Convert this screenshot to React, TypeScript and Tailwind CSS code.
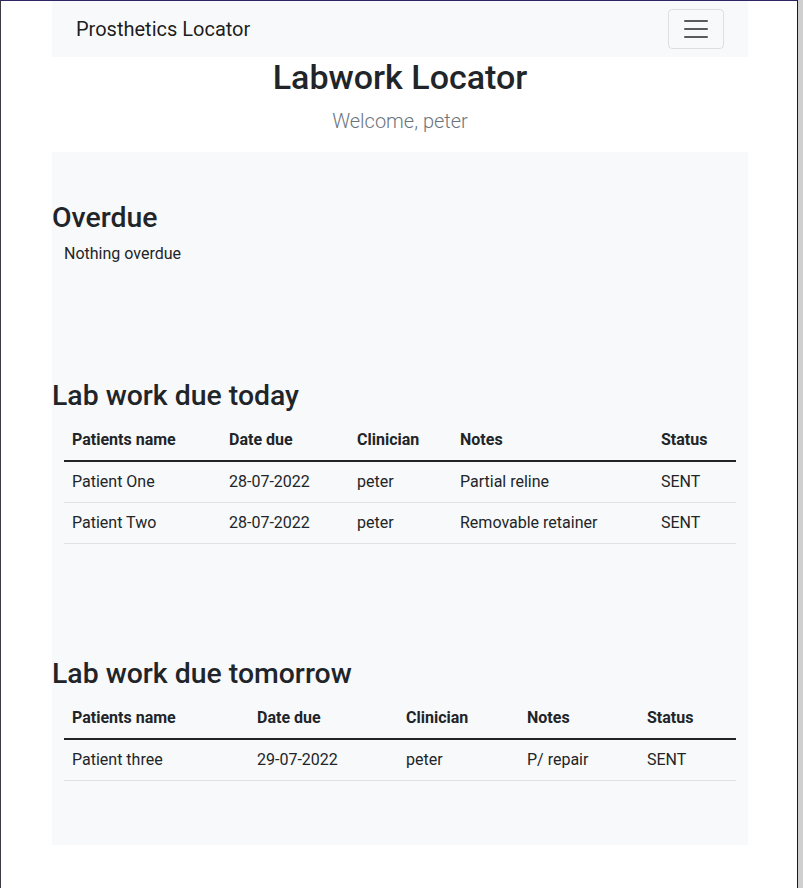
import React from "react";

type Row = { name: string; due: string; clinician: string; notes: string; status: string };

const today: Row[] = [
  { name: "Patient One", due: "28-07-2022", clinician: "peter", notes: "Partial reline", status: "SENT" },
  { name: "Patient Two", due: "28-07-2022", clinician: "peter", notes: "Removable retainer", status: "SENT" },
];

const tomorrow: Row[] = [
  { name: "Patient three", due: "29-07-2022", clinician: "peter", notes: "P/ repair", status: "SENT" },
];

function LabTable({ rows, widths }: { rows: Row[]; widths: string[] }) {
  const heads = ["Patients name", "Date due", "Clinician", "Notes", "Status"];
  return (
    <table className="mx-3 mb-4 w-[672px] table-fixed border-collapse text-base text-[#212529]">
      <colgroup>
        {widths.map((w, i) => (
          <col key={i} style={{ width: w }} />
        ))}
      </colgroup>
      <thead>
        <tr className="border-b-2 border-[#212529]">
          {heads.map((h) => (
            <th key={h} className="px-2 py-2 text-left font-bold leading-6">
              {h}
            </th>
          ))}
        </tr>
      </thead>
      <tbody>
        {rows.map((r, i) => (
          <tr key={i} className="border-b border-[#dee2e6]">
            <td className="px-2 py-2 leading-6">{r.name}</td>
            <td className="px-2 py-2 leading-6">{r.due}</td>
            <td className="px-2 py-2 leading-6">{r.clinician}</td>
            <td className="px-2 py-2 leading-6">{r.notes}</td>
            <td className="px-2 py-2 leading-6">{r.status}</td>
          </tr>
        ))}
      </tbody>
    </table>
  );
}

export default function App() {
  return (
    <div className="flex h-[888px] w-[803px] overflow-hidden bg-white font-['Roboto',sans-serif] text-[#212529]">
      <div className="h-full w-[798px] border-t border-l border-r border-t-[#2f2565] border-l-[#3c3c44] border-r-[#1a1a1a]">
        <div className="ml-[51px] w-[696px]">
          {/* Navbar */}
          <nav className="flex h-14 items-center justify-between bg-[#f8f9fa] px-6">
            <span className="text-xl leading-[30px] text-black/90">Prosthetics Locator</span>
            <button className="flex h-10 w-14 items-center justify-center rounded border border-black/10">
              <svg width="30" height="30" viewBox="0 0 30 30">
                <path d="M4 7h22M4 15h22M4 23h22" stroke="rgba(33,37,41,0.75)" strokeWidth="2" strokeLinecap="round" />
              </svg>
            </button>
          </nav>

          <h1 className="mb-2 text-center text-[34px] font-medium leading-[1.2]">Labwork Locator</h1>
          <p className="mb-4 text-center text-xl font-light leading-[30px] text-[#6c757d]">Welcome, peter</p>

          {/* Main panel */}
          <div className="flex flex-col bg-[#f8f9fa] py-12">
            <section>
              <h2 className="mb-[7px] pt-px text-[28.4px] font-medium leading-[1.2]">Overdue</h2>
              <p className="mb-4 px-3 leading-6">Nothing overdue</p>
            </section>

            <section className="mt-24">
              <h2 className="mb-[7px] pt-px text-[28.4px] font-medium leading-[1.2]">Lab work due today</h2>
              <LabTable rows={today} widths={["157px", "128px", "103px", "201px", "83px"]} />
            </section>

            <section className="mt-24">
              <h2 className="mb-[7px] pt-px text-[28.4px] font-medium leading-[1.2]">Lab work due tomorrow</h2>
              <LabTable rows={tomorrow} widths={["185px", "149px", "121px", "120px", "97px"]} />
            </section>
          </div>
        </div>
      </div>
      <div className="h-full w-[5px] bg-[#cfcfcf]" />
    </div>
  );
}
